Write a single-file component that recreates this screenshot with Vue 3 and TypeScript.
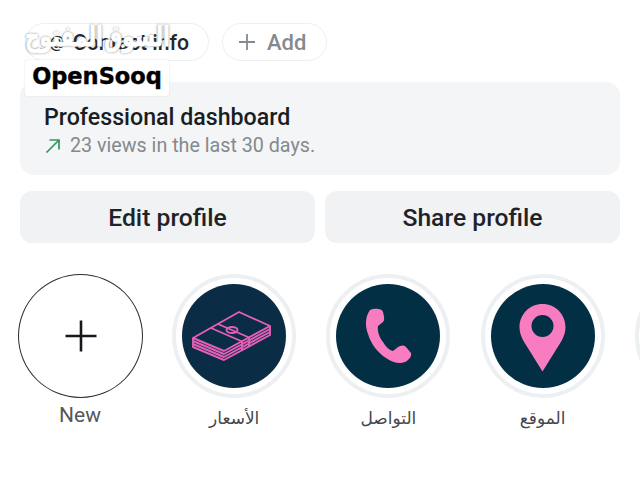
<script setup lang="ts">
interface Story { label: string; kind: string }
const stories: Story[] = [
  { label: 'الأسعار', kind: 'money' },
  { label: 'التواصل', kind: 'phone' },
  { label: 'الموقع', kind: 'pin' },
]
</script>

<template>
  <div class="page">
    <div class="chips">
      <div class="chip chip-info"><span class="at">@</span><span>Contact info</span></div>
      <div class="chip chip-add">
        <svg width="20" height="20" viewBox="0 0 20 20" class="plus-sm"><path d="M10 2v16M2 10h16" stroke="#858a8f" stroke-width="1.8" fill="none" /></svg>
        <span>Add</span>
      </div>
    </div>

    <section class="card">
      <h2>Professional dashboard</h2>
      <p>
        <svg width="18" height="18" viewBox="0 0 18 18"><path d="M2.500 15.500 15 3M5.500 3H15v9.500" stroke="#2c9a58" stroke-width="1.700" fill="none" /></svg>
        <span>23 views in the last 30 days.</span>
      </p>
    </section>

    <div class="actions">
      <button type="button">Edit profile</button>
      <button type="button">Share profile</button>
    </div>

    <div class="stories">
      <div class="story">
        <div class="new-ring">
          <svg width="34" height="34" viewBox="0 0 34 34"><path d="M17 1.500v31M1.500 17h31" stroke="#15191d" stroke-width="2.600" fill="none" /></svg>
        </div>
        <span class="label new-label">New</span>
      </div>
      <div v-for="s in stories" :key="s.kind" class="story">
        <div class="ring">
          <div class="disc" :class="s.kind">
            <svg v-if="s.kind === 'money'" width="104" height="104" viewBox="0 0 104 104" fill="none" stroke="#e35fb8" stroke-width="1.900" stroke-linejoin="round">
              <path d="M11 54 57 28 88 42 42 67Z" />
              <path d="M11 54v9L42 76 88 51v-9" />
              <path d="M11 57 42 70 88 45M11 60 42 73 88 48" />
              <path d="M36 40 67 53.500M29 44 60 57.500" />
              <path d="M60 57.500v9M67 53.500v9" />
              <ellipse cx="50" cy="46" rx="5.500" ry="3" />
            </svg>
            <svg v-else-if="s.kind === 'phone'" width="104" height="104" viewBox="0 0 104 104">
              <path fill="#f77cc0" d="M34 26C38 24 46 24 47 28 48 32 49 36 47 38L42 42C41 48 44 54 47 58 50 63 53 66 57 67L62 63C65 61 68 61 70 63L75 69C76 72 73 76 69 78 64 80 57 79 50 74 42 69 35 60 32 50 29 42 29 33 34 26Z" />
            </svg>
            <svg v-else width="104" height="104" viewBox="0 0 104 104">
              <path fill="#f77cc0" fill-rule="evenodd" d="M51.500 20c-13 0-23 10.500-23 23 0 5 1.500 9.500 4 14l19 30.500 19-30.500c2.500-4.500 4-9 4-14 0-12.500-10-23-23-23zm0 11a11 11 0 1 1 0 22 11 11 0 0 1 0-22z" />
            </svg>
          </div>
        </div>
        <span class="label arabic">{{ s.label }}</span>
      </div>
      <div class="story">
        <div class="ring"><div class="disc blank"></div></div>
      </div>
    </div>

    <div class="mark">
      <span class="mark-ar">السوق المفتوح</span>
      <span class="mark-en">OpenSooq</span>
    </div>
  </div>
</template>

<style scoped>
.page {
  position: relative;
  width: 640px;
  height: 480px;
  overflow: hidden;
  background: #fff;
  padding-top: 23px;
  box-sizing: border-box;
  font-family: Roboto, "Liberation Sans", sans-serif;
}
.chips {
  display: flex;
  gap: 13px;
  padding-left: 25px;
}
.chip {
  height: 38px;
  box-sizing: border-box;
  border: 1px solid #eeeff1;
  border-radius: 20px;
  display: flex;
  align-items: center;
  font-weight: 500;
}
.chip-info {
  width: 184px;
  justify-content: flex-end;
  gap: 8px;
  padding-right: 19px;
  color: #23272b;
  font-size: 21.200px;
}
.at { font-size: 17px; }
.chip-add {
  width: 105px;
  padding-left: 14px;
  gap: 10px;
  color: #858a8f;
  font-size: 22px;
}
.card {
  margin: 21px 20px 0;
  height: 93px;
  box-sizing: border-box;
  padding: 22px 24px 0;
  border-radius: 14px;
  background: #f3f5f7;
}
.card h2 {
  margin: 0;
  font-size: 23.200px;
  line-height: 27px;
  font-weight: 500;
  color: #1a1d21;
}
.card p {
  margin: 3px 0 0;
  display: flex;
  align-items: center;
  gap: 8px;
  font-size: 19.700px;
  line-height: 24px;
  color: #85898e;
}
.actions {
  display: flex;
  gap: 10px;
  margin: 16px 20px 0;
}
.actions button {
  flex: 1;
  height: 52px;
  border: 0;
  border-radius: 12px;
  background: #f0f2f4;
  color: #1f2327;
  font-family: inherit;
  font-size: 24.700px;
  font-weight: 500;
}
.stories {
  display: flex;
  gap: 30.200px;
  margin-top: 31px;
  padding-left: 18px;
}
.story {
  flex: none;
  width: 124px;
  display: flex;
  flex-direction: column;
  align-items: center;
}
.new-ring, .ring {
  height: 124px;
  box-sizing: border-box;
  border-radius: 50%;
  display: flex;
  align-items: center;
  justify-content: center;
  flex: none;
}
.ring { width: 124px; border: 4px solid #edf0f2; }
.new-ring { width: 125px; align-self: flex-start; border: 1.500px solid #2a2d31; }
.disc {
  width: 104px;
  height: 104px;
  border-radius: 50%;
  background: #032f44;
  display: flex;
}
.disc.money { background: #0b2c45; }
.disc.blank { background: #fff; }
.label {
  font-size: 21px;
  line-height: 24px;
  color: #53575b;
}
.new-label { margin-top: 5px; }
.arabic {
  margin-top: 8px;
  direction: rtl;
  color: #43474b;
  font-family: "DejaVu Sans", "Noto Sans", sans-serif;
  font-size: 17px;
}
.mark {
  position: absolute;
  left: 25px;
  top: 20px;
  display: flex;
  flex-direction: column;
  align-items: flex-start;
}
.mark-ar {
  width: 145px;
  height: 40px;
  line-height: 34px;
  display: flex;
  justify-content: center;
  direction: rtl;
  white-space: nowrap;
  font-family: "DejaVu Sans", sans-serif;
  font-size: 28px;
  font-weight: 700;
  word-spacing: -8px;
  color: #fff;
  -webkit-text-stroke: 1px #fff;
  text-shadow: 0 0 3px #555, 0 0 1px #555;
  transform: scaleX(0.72);
  transform-origin: center;
}
.mark-en {
  width: 144px;
  height: 36px;
  line-height: 33px;
  text-align: center;
  background: #fff;
  border-radius: 3px;
  box-shadow: 0 0 2px #ddd;
  font-family: "DejaVu Sans", sans-serif;
  font-weight: 700;
  font-size: 22.500px;
  color: #000;
  -webkit-text-stroke: 0.400px #000;
}
</style>
<style>
html, body { margin: 0; background: #fff; overflow: hidden; }
</style>
